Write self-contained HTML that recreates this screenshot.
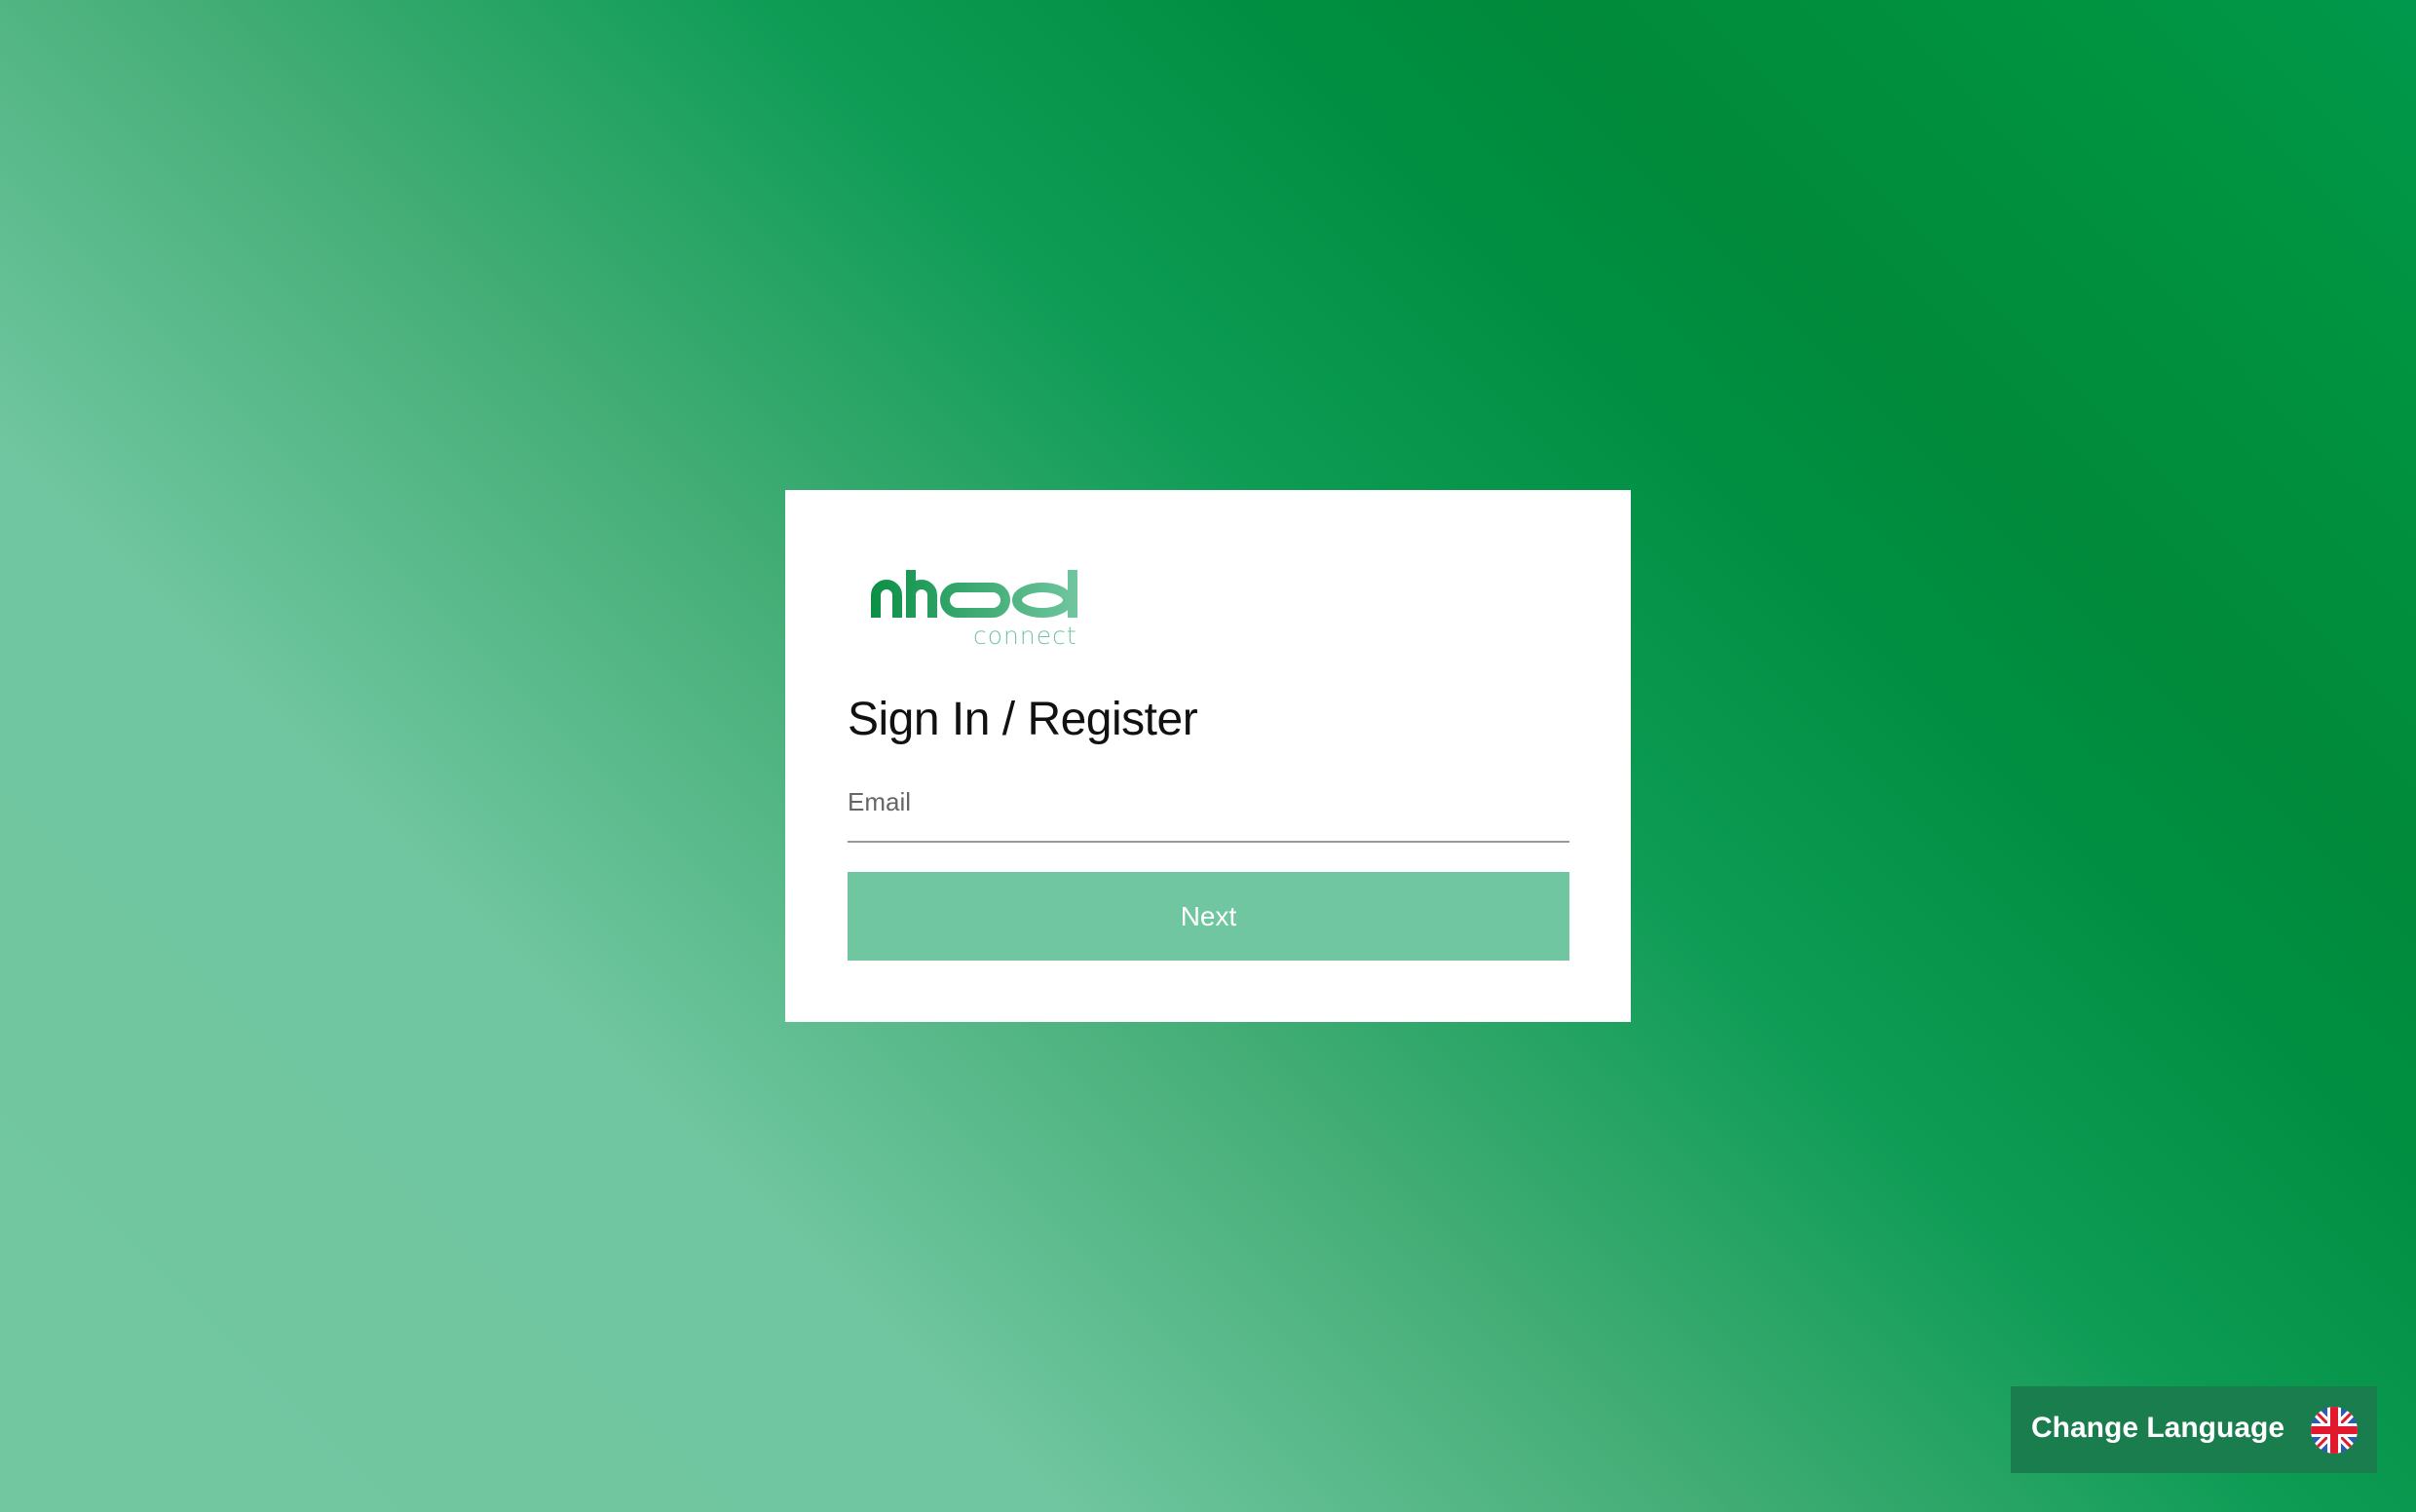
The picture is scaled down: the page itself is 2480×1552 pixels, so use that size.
<!DOCTYPE html>
<html><head><style>
html,body{margin:0;padding:0;width:2480px;height:1552px;overflow:hidden;font-family:"Liberation Sans",sans-serif}
body{background:linear-gradient(45deg,#72c7a1 0%,#70c6a0 27%,#45ae77 43%,#0e9c55 58%,#008f42 70%,#008a3a 78%,#00933f 90%,#00984c 100%);position:relative}
.card{position:absolute;left:806px;top:503px;width:868px;height:546px;background:#fff}
h1{position:absolute;left:64px;top:208px;margin:0;font-weight:normal;font-size:48px;color:#111;letter-spacing:-0.5px}
.lbl{position:absolute;left:64px;top:305px;font-size:26px;color:#666}
.line{position:absolute;left:64px;top:360px;width:741px;height:2px;background:#999}
.btn{position:absolute;left:64px;top:392px;width:741px;height:91px;background:#70c6a0;color:#fff;font-size:28px;text-align:center;line-height:91px}
.lang{position:absolute;left:2064px;top:1423px;width:376px;height:89px;background:#1a7d4e;color:#fff;font-weight:bold;font-size:30px}
.lang span{position:absolute;left:21px;top:26px}
</style></head><body>
<div class="card">
<svg style="position:absolute;left:80px;top:75px" width="230" height="90" viewBox="80 75 230 90">
<defs><linearGradient id="g" gradientUnits="userSpaceOnUse" x1="88" y1="0" x2="300" y2="0"><stop offset="0" stop-color="#0a8f45"/><stop offset="1" stop-color="#70c6a0"/></linearGradient></defs>
<g fill="none" stroke="url(#g)" stroke-width="10">
<path d="M93 131 V108 a11 11 0 0 1 22 0 V131"/>
<path d="M129 82 V131 M129 108 a11 11 0 0 1 22 0 V131"/>
<rect x="164" y="100" width="62" height="26" rx="13"/>
<ellipse cx="264" cy="113" rx="26" ry="13"/>
<path d="M295 82 V131"/>
</g>
<text x="193" y="158" font-family="DejaVu Sans" font-weight="200" font-size="25" fill="#70c6a0" letter-spacing="1">connect</text>
</svg>
<h1>Sign In / Register</h1>
<div class="lbl">Email</div>
<div class="line"></div>
<div class="btn">Next</div>
</div>
<div class="lang"><span>Change Language</span>
<svg style="position:absolute;left:308px;top:21px" width="48" height="48" viewBox="0 0 48 48">
<defs><clipPath id="c"><circle cx="24" cy="24" r="24"/></clipPath></defs>
<g clip-path="url(#c)">
<rect width="48" height="48" fill="#2a5cb8"/>
<path d="M0 0 L48 48 M48 0 L0 48" stroke="#fff" stroke-width="9"/>
<path d="M0 0 L48 48 M48 0 L0 48" stroke="#e0192f" stroke-width="3"/>
<path d="M24 0 V48 M0 24 H48" stroke="#fff" stroke-width="14"/>
<path d="M24 0 V48 M0 24 H48" stroke="#e0192f" stroke-width="8"/>
</g></svg>
</div>
</body></html>
